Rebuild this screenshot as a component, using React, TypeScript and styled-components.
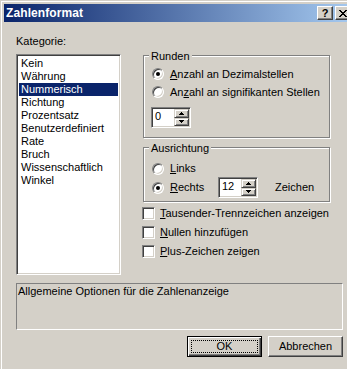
import React from "react";
import styled, { createGlobalStyle } from "styled-components";

const GlobalStyle = createGlobalStyle`
  html, body {
    margin: 0;
    padding: 0;
    overflow: hidden;
    background: #d4d0c8;
  }
  body {
    font-family: "Liberation Sans", Arial, sans-serif;
    font-size: 11px;
    color: #000;
  }
`;

const categories = [
  "Kein",
  "Währung",
  "Nummerisch",
  "Richtung",
  "Prozentsatz",
  "Benutzerdefiniert",
  "Rate",
  "Bruch",
  "Wissenschaftlich",
  "Winkel",
];

const Mnemonic: React.FC<{ text: string; at: number }> = ({ text, at }) => (
  <>
    {text.slice(0, at)}
    <u>{text.charAt(at)}</u>
    {text.slice(at + 1)}
  </>
);

const Radio: React.FC<{ checked?: boolean; label: string; at: number; labelWidth?: number }> = ({
  checked,
  label,
  at,
  labelWidth,
}) => (
  <>
    <RadioCircle $checked={!!checked} />
    <OptionLabel $width={labelWidth}>
      <Mnemonic text={label} at={at} />
    </OptionLabel>
  </>
);

const Spin: React.FC<{ value: string }> = ({ value }) => (
  <SpinBox>
    <SpinValue>{value}</SpinValue>
    <SpinButtons>
      <SpinButton>
        <svg width="5" height="3" viewBox="0 0 5 3">
          <path d="M2 0h1v1h1v1h1v1H0V2h1V1h1z" fill="#000" />
        </svg>
      </SpinButton>
      <SpinButton>
        <svg width="5" height="3" viewBox="0 0 5 3">
          <path d="M0 0h5v1H4v1H3v1H2V2H1V1H0z" fill="#000" />
        </svg>
      </SpinButton>
    </SpinButtons>
  </SpinBox>
);

const App: React.FC = () => {
  return (
    <>
      <GlobalStyle />
      <Window>
        <TitleBar>
          <TitleText>Zahlenformat</TitleText>
          <TitleButton>?</TitleButton>
          <TitleButton $gap={2}>
            <svg width="8" height="7" viewBox="0 0 8 7">
              <path
                d="M0 0h2v1h1v1h2V1h1V0h2v1H7v1H6v1H5v1h1v1h1v1h1v1H6V6H5V5H3v1H2v1H0V6h1V5h1V4h1V3H2V2H1V1H0z"
                fill="#000"
              />
            </svg>
          </TitleButton>
        </TitleBar>
        <Body>
          <TopArea>
            <LeftColumn>
              <FieldLabel>Kategorie:</FieldLabel>
              <ListBox>
                {categories.map((c) => (
                  <ListItem key={c} $selected={c === "Nummerisch"}>
                    {c}
                  </ListItem>
                ))}
              </ListBox>
            </LeftColumn>
            <RightColumn>
              <GroupBox $height={83} $top={20}>
                <GroupTitle>Runden</GroupTitle>
                <OptionRow $height={18} $top={2}>
                  <Radio checked label="Anzahl an Dezimalstellen" at={0} />
                </OptionRow>
                <OptionRow $height={18}>
                  <Radio label="Anzahl an signifikanten Stellen" at={2} />
                </OptionRow>
                <OptionRow $height={21} $top={6} $left={-1}>
                  <Spin value="0" />
                </OptionRow>
              </GroupBox>
              <GroupBox $height={55} $top={9}>
                <GroupTitle>Ausrichtung</GroupTitle>
                <OptionRow $height={17} $top={5}>
                  <Radio label="Links" at={0} />
                </OptionRow>
                <OptionRow $height={21}>
                  <Radio checked label="Rechts" at={0} labelWidth={48} />
                  <Spin value="12" />
                  <UnitLabel>Zeichen</UnitLabel>
                </OptionRow>
              </GroupBox>
              <CheckList>
                <CheckRow>
                  <CheckBox />
                  <OptionLabel>
                    <Mnemonic text="Tausender-Trennzeichen anzeigen" at={0} />
                  </OptionLabel>
                </CheckRow>
                <CheckRow>
                  <CheckBox />
                  <OptionLabel>
                    <Mnemonic text="Nullen hinzufügen" at={0} />
                  </OptionLabel>
                </CheckRow>
                <CheckRow>
                  <CheckBox />
                  <OptionLabel>
                    <Mnemonic text="Plus-Zeichen zeigen" at={0} />
                  </OptionLabel>
                </CheckRow>
              </CheckList>
            </RightColumn>
          </TopArea>
          <Description>Allgemeine Optionen für die Zahlenanzeige</Description>
          <ButtonRow>
            <DefaultButton>
              <FocusRect>OK</FocusRect>
            </DefaultButton>
            <PushButton>Abbrechen</PushButton>
          </ButtonRow>
        </Body>
      </Window>
    </>
  );
};

const Window = styled.div`
  width: 357px;
  height: 380px;
  box-sizing: border-box;
  padding: 4px;
  background: #d4d0c8;
  box-shadow: inset 1px 1px 0 #d4d0c8, inset 2px 2px 0 #fff;
  display: flex;
  flex-direction: column;
`;

const TitleBar = styled.div`
  height: 18px;
  display: flex;
  align-items: center;
  padding: 0 2px 0 2px;
  background: linear-gradient(to right, #0a246a, #a6caf0);
`;

const TitleText = styled.div`
  flex: 1;
  color: #fff;
  font-weight: bold;
  font-size: 12px;
  line-height: 18px;
  letter-spacing: 0.1px;
`;

const TitleButton = styled.div<{ $gap?: number }>`
  width: 16px;
  height: 14px;
  box-sizing: border-box;
  margin-left: ${({ $gap }) => $gap ?? 0}px;
  background: #d4d0c8;
  border: 1px solid;
  border-color: #fff #404040 #404040 #fff;
  box-shadow: inset -1px -1px 0 #808080;
  display: flex;
  align-items: center;
  justify-content: center;
  font-weight: bold;
  font-size: 11px;
  line-height: 12px;
`;

const Body = styled.div`
  padding: 13px 0 0 12px;
`;

const TopArea = styled.div`
  display: flex;
  gap: 22px;
  align-items: flex-start;
`;

const LeftColumn = styled.div`
  width: 105px;
  display: flex;
  flex-direction: column;
`;

const FieldLabel = styled.div`
  line-height: 13px;
  height: 13px;
  margin-bottom: 6px;
`;

const ListBox = styled.div`
  height: 221px;
  box-sizing: border-box;
  background: #fff;
  border: 1px solid;
  border-color: #808080 #fff #fff #808080;
  box-shadow: inset 1px 1px 0 #404040, inset -1px -1px 0 #d4d0c8;
  padding: 2px;
`;

const ListItem = styled.div<{ $selected: boolean }>`
  height: 13px;
  line-height: 13px;
  padding-left: 2px;
  white-space: nowrap;
  background: ${({ $selected }) => ($selected ? "#0a246a" : "transparent")};
  color: ${({ $selected }) => ($selected ? "#fff" : "#000")};
`;

const RightColumn = styled.div`
  width: 187px;
  display: flex;
  flex-direction: column;
`;

const GroupBox = styled.div<{ $height: number; $top: number }>`
  height: ${({ $height }) => $height}px;
  margin-top: ${({ $top }) => $top}px;
  box-sizing: border-box;
  border: 1px solid #808080;
  box-shadow: inset 1px 1px 0 #fff, 1px 1px 0 #fff;
  padding-left: 8px;
  display: flex;
  flex-direction: column;
`;

const GroupTitle = styled.div`
  align-self: flex-start;
  margin: -6px 0 0 -3px;
  padding: 0 2px;
  line-height: 13px;
  height: 13px;
  background: #d4d0c8;
`;

const OptionRow = styled.div<{ $height: number; $top?: number; $left?: number }>`
  height: ${({ $height }) => $height}px;
  margin-top: ${({ $top }) => $top ?? 0}px;
  margin-left: ${({ $left }) => $left ?? 0}px;
  display: flex;
  align-items: center;
`;

const RadioCircle = styled.span<{ $checked: boolean }>`
  position: relative;
  width: 12px;
  height: 12px;
  flex: none;
  box-sizing: border-box;
  border-radius: 50%;
  background: #fff;
  border: 1px solid;
  border-color: #808080 #fff #fff #808080;
  box-shadow: inset 1px 1px 0 #404040, inset -1px -1px 0 #d4d0c8;
  &::after {
    content: "";
    display: ${({ $checked }) => ($checked ? "block" : "none")};
    position: absolute;
    left: 3px;
    top: 3px;
    width: 4px;
    height: 4px;
    border-radius: 50%;
    background: #000;
  }
`;

const OptionLabel = styled.span<{ $width?: number }>`
  margin-left: 6px;
  white-space: nowrap;
  line-height: 13px;
  ${({ $width }) => ($width ? `width: ${$width}px;` : "")}
  u {
    text-decoration-thickness: 1px;
    text-underline-offset: 1px;
  }
`;

const UnitLabel = styled.span`
  margin-left: 17px;
  line-height: 13px;
`;

const SpinBox = styled.div`
  width: 40px;
  height: 21px;
  box-sizing: border-box;
  display: flex;
  background: #fff;
  border: 1px solid;
  border-color: #808080 #fff #fff #808080;
  box-shadow: inset 1px 1px 0 #404040, inset -1px -1px 0 #d4d0c8;
  padding: 1px;
`;

const SpinValue = styled.div`
  flex: 1;
  padding-left: 2px;
  line-height: 15px;
`;

const SpinButtons = styled.div`
  width: 15px;
  display: flex;
  flex-direction: column;
`;

const SpinButton = styled.div`
  flex: 1;
  box-sizing: border-box;
  background: #d4d0c8;
  border: 1px solid;
  border-color: #d4d0c8 #404040 #404040 #d4d0c8;
  box-shadow: inset 1px 1px 0 #fff, inset -1px -1px 0 #808080;
  display: flex;
  align-items: center;
  justify-content: center;
  svg {
    display: block;
  }
`;

const CheckList = styled.div`
  margin-top: 2px;
  margin-left: -1px;
  display: flex;
  flex-direction: column;
`;

const CheckRow = styled.div`
  height: 19px;
  display: flex;
  align-items: center;
  & > span:last-child {
    margin-left: 5px;
  }
`;

const CheckBox = styled.span`
  width: 13px;
  height: 13px;
  flex: none;
  box-sizing: border-box;
  background: #fff;
  border: 1px solid;
  border-color: #808080 #fff #fff #808080;
  box-shadow: inset 1px 1px 0 #404040, inset -1px -1px 0 #d4d0c8;
`;

const Description = styled.div`
  width: 327px;
  height: 47px;
  box-sizing: border-box;
  margin-top: 8px;
  border: 1px solid;
  border-color: #808080 #fff #fff #808080;
  padding: 1px 1px;
  line-height: 13px;
`;

const ButtonRow = styled.div`
  width: 327px;
  margin-top: 6px;
  display: flex;
  justify-content: flex-end;
  gap: 6px;
`;

const PushButton = styled.div`
  width: 75px;
  height: 21px;
  box-sizing: border-box;
  background: #d4d0c8;
  border: 1px solid;
  border-color: #fff #404040 #404040 #fff;
  box-shadow: inset -1px -1px 0 #808080;
  display: flex;
  align-items: center;
  justify-content: center;
  line-height: 13px;
`;

const DefaultButton = styled(PushButton)`
  border-color: #000;
  box-shadow: inset 1px 1px 0 #fff, inset -1px -1px 0 #404040, inset -2px -2px 0 #808080;
  padding: 3px;
`;

const FocusRect = styled.div`
  width: 100%;
  height: 100%;
  box-sizing: border-box;
  border: 1px dotted #000;
  display: flex;
  align-items: center;
  justify-content: center;
`;

export default App;
